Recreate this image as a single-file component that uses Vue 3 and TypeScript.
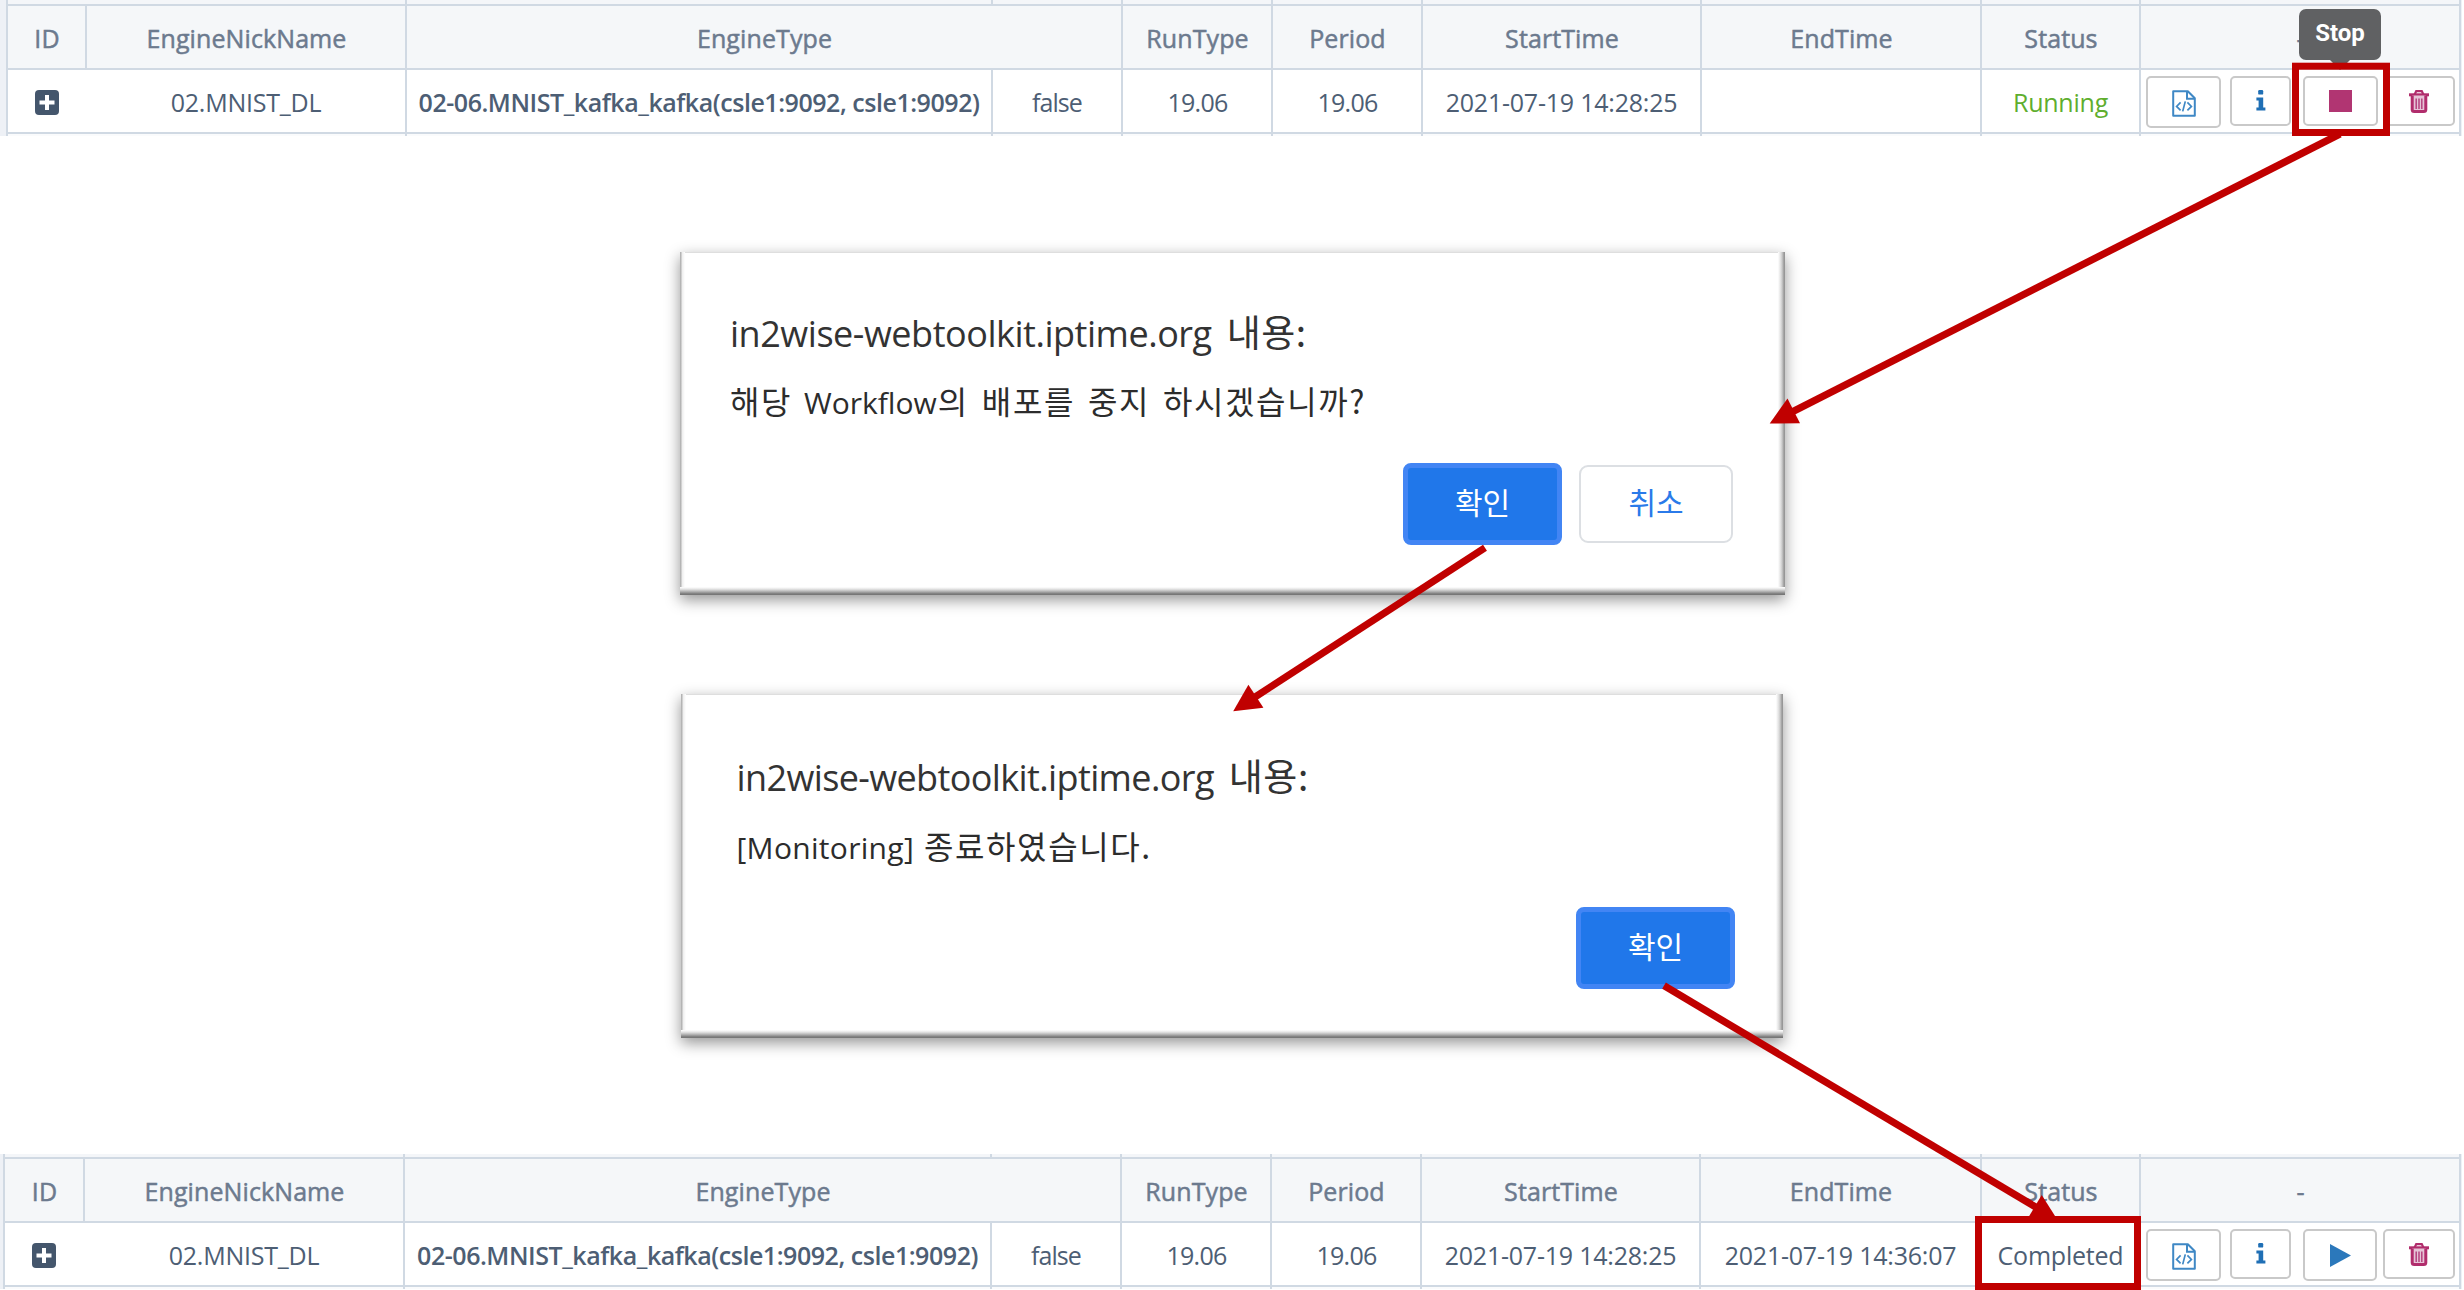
<script setup lang="ts">
interface Row {
  nick: string
  engine: string
  flag: string
  runType: string
  period: string
  start: string
  end: string
  status: string
  running: boolean
}

interface Dialog {
  id: string
  message: { text: string; latin: boolean }[]
  cancel: boolean
}

const base = {
  nick: '02.MNIST_DL',
  engine: '02-06.MNIST_kafka_kafka(csle1:9092, csle1:9092)',
  flag: 'false',
  runType: '19.06',
  period: '19.06',
  start: '2021-07-19 14:28:25',
}

const before: Row = { ...base, end: '', status: 'Running', running: true }
const after: Row = { ...base, end: '2021-07-19 14:36:07', status: 'Completed', running: false }

const tables = [
  { id: 'before', row: before },
  { id: 'after', row: after },
]

const dialogs: Dialog[] = [
  {
    id: 'confirm',
    message: [
      { text: '해당', latin: false },
      { text: 'Workflow', latin: true },
      { text: '의 배포를 중지 하시겠습니까?', latin: false },
    ],
    cancel: true,
  },
  {
    id: 'done',
    message: [
      { text: '[Monitoring]', latin: true },
      { text: '종료하였습니다.', latin: false },
    ],
    cancel: false,
  },
]

const strip = ['s-id', 's', 's', 's', 's', 's', 's', 's', 's']
</script>

<template>
  <main class="page">
    <section
      v-for="(t, i) in tables"
      :key="t.id"
      class="grid"
      :class="t.id"
      :style="{ order: i * 2 }"
    >
      <div v-for="(s, n) in strip" :key="'t' + n" class="strip" :class="s"></div>

      <div class="cell head">ID</div>
      <div class="cell head">EngineNickName</div>
      <div class="cell head wide">EngineType</div>
      <div class="cell head">RunType</div>
      <div class="cell head">Period</div>
      <div class="cell head">StartTime</div>
      <div class="cell head">EndTime</div>
      <div class="cell head">Status</div>
      <div class="cell head">-</div>

      <div class="cell">
        <svg class="plus" viewBox="0 0 24 25">
          <rect width="24" height="25" rx="4" fill="#44566c" />
          <path d="M12 5v15M4.5 12.5h15" stroke="#fff" stroke-width="4" />
        </svg>
      </div>
      <div class="cell open">{{ t.row.nick }}</div>
      <div class="cell strong">{{ t.row.engine }}</div>
      <div class="cell tight">{{ t.row.flag }}</div>
      <div class="cell num">{{ t.row.runType }}</div>
      <div class="cell num">{{ t.row.period }}</div>
      <div class="cell">{{ t.row.start }}</div>
      <div class="cell">{{ t.row.end }}</div>
      <div class="cell" :class="{ green: t.row.running }">{{ t.row.status }}</div>
      <div class="cell actions">
        <span class="btn code">
          <svg width="24" height="27" viewBox="0 0 24 27" fill="none" stroke="#3f88c5" stroke-width="2">
            <path d="M1.2 1.2h14.6l7 7v17.6H1.2z" stroke-linejoin="round" />
            <path d="M15 1.5v7.3h7.5" />
            <path d="M8.6 12.4l-4 4 4 4M15.4 12.4l4 4-4 4M13.3 11.4l-2.6 10" stroke-width="1.7" />
          </svg>
        </span>
        <span class="btn info">
          <svg width="10" height="21" viewBox="0 0 10 21" fill="#1f6fb5">
            <rect x="2.2" y="0" width="5" height="4.6" rx="1.2" />
            <path d="M.4 7.4h6.8v10h2.2v3.2H.4v-3.2h2.2v-6.8H.4z" />
          </svg>
        </span>
        <span v-if="t.row.running" class="btn stop"><i class="square"></i></span>
        <span v-else class="btn play">
          <svg width="21" height="23" viewBox="0 0 21 23"><path d="M0 0l21 11.5L0 23z" fill="#2b78bb" /></svg>
        </span>
        <span class="btn trash">
          <svg width="20" height="23" viewBox="0 0 20 23" fill="none">
            <path d="M0 4.8h20" stroke="#b12d6c" stroke-width="3" />
            <path d="M5.6 4.4l1.6-3.2h5.6l1.6 3.2" stroke="#b12d6c" stroke-width="2.2" />
            <path d="M3.2 5.5v14q0 2 2 2h9.6q2 0 2-2v-14" fill="#e6c3d6" stroke="#b12d6c" stroke-width="3" />
            <path d="M7.2 8.5v10.5M10 8.5v10.5M12.8 8.5v10.5" stroke="#b5437f" stroke-width="1.5" />
          </svg>
        </span>
      </div>

      <div v-for="(s, n) in strip" :key="'b' + n" class="strip low" :class="s"></div>
    </section>

    <div class="dialogs">
      <section v-for="d in dialogs" :key="d.id" class="dialog" :class="d.id">
        <h2 class="title"><span>in2wise-webtoolkit.iptime.org</span><span class="ko">내용:</span></h2>
        <p class="message">
          <span v-for="m in d.message" :key="m.text" :class="m.latin ? 'latin' : 'ko'">{{ m.text }}</span>
        </p>
        <div class="buttons">
          <button class="primary">확인</button>
          <button v-if="d.cancel" class="secondary">취소</button>
        </div>
      </section>
    </div>

    <div class="tooltip">Stop</div>

    <svg class="notes" viewBox="0 0 2464 1290">
      <g stroke="#c00000" stroke-width="7.2">
        <path d="M2340 134L1790 413" />
        <path d="M1485 547.7L1252 699" />
        <path d="M1664 985.7L2038 1208.4" />
      </g>
      <g fill="#c00000">
        <path d="M1769.7 423.5L1787.5 398.5L1800 423.3z" />
        <path d="M1233.2 711.2L1248.4 684.8L1263.4 707.8z" />
        <path d="M2057.9 1220.6L2041.7 1195L2027.7 1218.6z" />
      </g>
      <g fill="none" stroke="#c00000" stroke-width="7">
        <rect x="2295.5" y="66.2" width="91" height="66.3" />
        <rect x="1978.5" y="1219.5" width="159" height="67" />
      </g>
    </svg>
  </main>
</template>

<style>
body {
  margin: 0;
  background: #fff;
}
</style>

<style scoped>
.page {
  position: relative;
  display: flex;
  flex-direction: column;
  width: 2464px;
  height: 1290px;
  overflow: hidden;
  background: #fff;
  font-family: "Open Sans", "Noto Sans CJK KR", sans-serif;
}

.grid {
  display: grid;
  flex: none;
  box-sizing: border-box;
  width: 2462px;
  border-right: 1px solid #eef1f6;
}
.before {
  grid-template-columns: 79px 320px 586px 130px 150px 150px 279px 280px 159px 322px;
  grid-template-rows: 4px 64px 64px 4px;
  border-left: 6px solid #eef1f6;
}
.after {
  grid-template-columns: 80px 320px 587px 130px 150px 150px 279px 281px 159px 322px;
  grid-template-rows: 3px 64px 64px 4px;
  border-left: 3px solid #eef1f6;
}

.strip {
  border-left: 2px solid #d0d9e3;
  background: #f4f6f9;
}
.strip:nth-child(9),
.strip:last-child {
  border-right: 2px solid #d0d9e3;
}
.strip.low {
  border-top: 2px solid #d0d9e3;
  background: #fafbfc;
}
.s-id {
  grid-column: span 2;
}

.cell {
  display: flex;
  align-items: center;
  justify-content: center;
  box-sizing: border-box;
  min-width: 0;
  border-top: 2px solid #d0d9e3;
  border-left: 2px solid #d0d9e3;
  padding-top: 2px;
  color: #4d5e74;
  font-size: 25px;
  letter-spacing: -0.22px;
  line-height: 34px;
  white-space: nowrap;
}
.head {
  padding-left: 1px;
  background: #f5f7f9;
  color: #6c7a8e;
  font-weight: 500;
  letter-spacing: 0.1px;
  -webkit-text-stroke: 0.5px #6c7a8e;
}
.wide {
  grid-column: span 2;
}
.open {
  border-left-color: transparent;
  border-left-width: 0;
  padding-left: 2px;
}
.strong {
  font-weight: 600;
  letter-spacing: -0.46px;
}
.tight {
  letter-spacing: -0.95px;
}
.num {
  padding-left: 1px;
  letter-spacing: -0.75px;
}
.green {
  color: #5fae2e;
}
.plus {
  width: 24px;
  height: 25px;
}

.actions {
  align-items: flex-start;
  justify-content: flex-start;
  padding: 6px 0 0 5px;
  border-right: 2px solid #d0d9e3;
}
.head:nth-child(18) {
  border-right: 2px solid #d0d9e3;
}
.btn {
  display: flex;
  flex: none;
  justify-content: center;
  box-sizing: border-box;
  height: 50px;
  padding-top: 12px;
  border: 2px solid #c9c9c9;
  border-radius: 5px;
  background: #fff;
}
.code {
  width: 75px;
  height: 52px;
}
.info {
  width: 61px;
  margin-left: 9px;
}
.stop {
  width: 75px;
  margin-left: 12px;
}
.play {
  width: 74px;
  height: 52px;
  margin-left: 12px;
  padding-top: 13px;
}
.trash {
  width: 72px;
  margin-left: 5px;
}
.play + .trash {
  margin-left: 6px;
}
.square {
  width: 23px;
  height: 22px;
  background: #b13572;
}

.dialogs {
  display: flex;
  flex: none;
  flex-direction: column;
  gap: 99px;
  order: 1;
  margin: 116px 0 116px;
}
.dialog {
  display: flex;
  flex-direction: column;
  box-sizing: border-box;
  background:
    linear-gradient(to top, #777 0 1px, #8f8f8f 2px, #bdbdbd 4px, #e6e6e6 6px, #fff 8px) bottom / 100% 8px no-repeat,
    linear-gradient(to left, #979797 0 1px, #b5b5b5 2px, #dcdcdc 4px, #fff 7px) right / 7px 100% no-repeat,
    linear-gradient(to right, #b4b4b4 0 1px, #ededed 2px, #fff 5px) left / 5px 100% no-repeat,
    linear-gradient(#dedede, #dedede) top / 100% 1px no-repeat,
    #fff;
  box-shadow: 0 5px 14px rgba(0, 0, 0, 0.42);
  color: #333;
}
.confirm {
  width: 1105px;
  height: 343px;
  margin-left: 680px;
  padding: 54px 52px 0 50px;
}
.done {
  width: 1102px;
  height: 344px;
  margin-left: 681px;
  padding: 56px 48px 0 55.5px;
}
.title,
.message {
  display: flex;
  align-items: baseline;
  height: 50px;
  margin: 0;
  font-weight: 400;
  line-height: 50px;
  white-space: nowrap;
}
.title {
  font-size: 36px;
  letter-spacing: -0.47px;
}
.done .title {
  letter-spacing: -0.62px;
}
.title .ko {
  margin-left: 15px;
  font-family: "Noto Sans CJK KR", sans-serif;
  font-size: 37px;
  letter-spacing: 0.5px;
}
.message {
  margin-top: 19px;
  color: #2c2c2c;
  font-size: 30px;
}
.done .message {
  margin-top: 20px;
  letter-spacing: 0.3px;
}
.message .ko {
  font-family: "Noto Sans CJK KR", sans-serif;
  font-size: 32px;
  letter-spacing: 1.6px;
  word-spacing: 4.2px;
}
.confirm .latin {
  margin-left: 12px;
}
.confirm .latin + .ko {
  margin-left: 1px;
}
.done .message .ko {
  margin-left: 10px;
}
.buttons {
  display: flex;
  align-items: center;
  justify-content: flex-end;
  gap: 17px;
  height: 82px;
  margin-top: 38px;
}
.done .buttons {
  margin-top: 37px;
}
.primary,
.secondary {
  box-sizing: border-box;
  margin: 0;
  padding: 0 0 7px;
  font-family: "Noto Sans CJK KR", sans-serif;
  font-size: 30px;
  line-height: 40px;
}
.primary {
  width: 159px;
  height: 82px;
  border: 5px solid #4285f4;
  border-radius: 8px;
  background: #2077ea;
  color: #fff;
}
.secondary {
  width: 154px;
  height: 78px;
  border: 2px solid #dcdfe3;
  border-radius: 9px;
  background: #fff;
  color: #2a7ae9;
}

.tooltip {
  position: absolute;
  top: 9px;
  left: 2299px;
  width: 82px;
  height: 51px;
  border-radius: 7px;
  background: #606163;
  color: #fff;
  font: 700 24px/49px Roboto, sans-serif;
  text-align: center;
}
.tooltip::after {
  content: "";
  position: absolute;
  top: 51px;
  left: 31px;
  border: 10px solid transparent;
  border-top-color: #606163;
  border-bottom: 0;
}
.notes {
  position: absolute;
  top: 0;
  left: 0;
  width: 2464px;
  height: 1290px;
}
</style>
